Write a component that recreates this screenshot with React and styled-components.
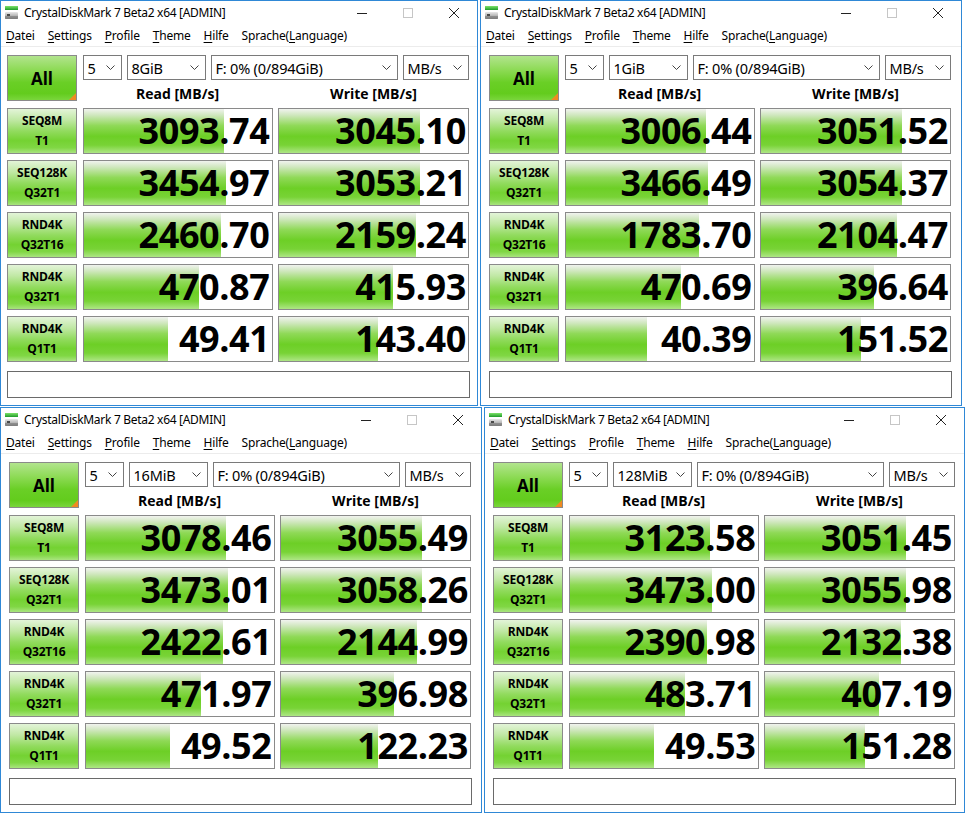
import React from "react";
import styled, { createGlobalStyle } from "styled-components";

const GlobalStyle = createGlobalStyle`
  html, body {
    margin: 0;
    padding: 0;
    background: #ffffff;
    overflow: hidden;
  }
  body {
    font-family: "Open Sans", "Noto Sans", "Liberation Sans", sans-serif;
    color: #000;
  }
`;

const windows = [
  {
    size: "8GiB",
    read: [3093.74, 3454.97, 2460.7, 470.87, 49.41],
    write: [3045.1, 3053.21, 2159.24, 415.93, 143.4],
  },
  {
    size: "1GiB",
    read: [3006.44, 3466.49, 1783.7, 470.69, 40.39],
    write: [3051.52, 3054.37, 2104.47, 396.64, 151.52],
  },
  {
    size: "16MiB",
    read: [3078.46, 3473.01, 2422.61, 471.97, 49.52],
    write: [3055.49, 3058.26, 2144.99, 396.98, 122.23],
  },
  {
    size: "128MiB",
    read: [3123.58, 3473.0, 2390.98, 483.71, 49.53],
    write: [3051.45, 3055.98, 2132.38, 407.19, 151.28],
  },
];

const tests = [
  ["SEQ8M", "T1"],
  ["SEQ128K", "Q32T1"],
  ["RND4K", "Q32T16"],
  ["RND4K", "Q32T1"],
  ["RND4K", "Q1T1"],
];

const Page = styled.div`
  width: 965px;
  height: 813px;
  display: flex;
  flex-direction: column;
  gap: 1px;
`;

const Row = styled.div`
  display: flex;
  gap: 2px;
  height: ${(p) => p.$h}px;
`;

const Window = styled.div`
  width: ${(p) => p.$w}px;
  flex: ${(p) => (p.$w ? "none" : "1")};
  height: 100%;
  box-sizing: border-box;
  border: 1px solid #2f88d6;
  background: #fff;
  display: flex;
  flex-direction: column;
  overflow: hidden;
`;

const TitleBar = styled.div`
  height: 23px;
  display: flex;
  align-items: center;
  padding-left: 3px;
  font-family: "Noto Sans", "Open Sans", sans-serif;
  font-size: 12px;
  color: #000;
`;

const TitleText = styled.span`
  margin-left: 5px;
  letter-spacing: -0.3px;
`;

const Caption = styled.div`
  margin-left: auto;
  display: flex;
  height: 100%;
`;

const CaptionButton = styled.div`
  width: 46px;
  height: 100%;
  display: flex;
  align-items: center;
  justify-content: center;
`;

const MenuBar = styled.div`
  height: 22px;
  display: flex;
  align-items: center;
  border-bottom: 1px solid #ececec;
  font-family: "Noto Sans", "Open Sans", sans-serif;
  font-size: 12px;
`;

const MenuItem = styled.span`
  padding: 0 6px 0 5px;
  margin-right: 2px;
  letter-spacing: -0.2px;
  u {
    text-decoration: underline;
    text-underline-offset: 2px;
  }
`;

const Body = styled.div`
  padding: 8px 0 0 ${(p) => p.$pad}px;
  display: flex;
  flex-direction: column;
  gap: 6px;
  width: 463px;
`;

const Grid = styled.div`
  display: grid;
  grid-template-columns: 70px 190px 191px;
  column-gap: 5.5px;
`;

const TopArea = styled(Grid)`
  grid-template-rows: 25px 21px;
  margin-bottom: 1px;
`;

const AllButton = styled.div`
  grid-row: 1 / span 2;
  position: relative;
  box-sizing: border-box;
  border: 1px solid #8a8a8a;
  background: linear-gradient(
    to bottom,
    #b2e48e 0%,
    #8fdb58 30%,
    #6acf26 60%,
    #63cc1d 85%,
    #7ad63c 100%
  );
  display: flex;
  align-items: center;
  justify-content: center;
  font-weight: 700;
  font-size: 17px;
  &::after {
    content: "";
    position: absolute;
    right: 0;
    bottom: 0;
    border-style: solid;
    border-width: 0 0 7px 7px;
    border-color: transparent transparent #f08a22 transparent;
  }
`;

const ComboRow = styled.div`
  grid-column: 2 / span 2;
  display: flex;
  gap: 5px;
`;

const Combo = styled.div`
  width: ${(p) => (p.$w ? `${p.$w}px` : "auto")};
  flex: ${(p) => (p.$w ? "none" : "1")};
  box-sizing: border-box;
  border: 1px solid #7a7a7a;
  background: #fff;
  display: flex;
  align-items: center;
  padding: 0 6px 0 4px;
  font-family: "Noto Sans", "Open Sans", sans-serif;
  font-size: 14.5px;
  letter-spacing: -0.2px;
  svg {
    margin-left: auto;
  }
`;

const Header = styled.div`
  display: flex;
  align-items: center;
  justify-content: center;
  font-weight: 700;
  font-size: 14px;
  padding-top: 6px;
`;

const DataRow = styled(Grid)`
  height: 46px;
`;

const LabelButton = styled.div`
  box-sizing: border-box;
  border: 1px solid #8a8a8a;
  background: linear-gradient(
    to bottom,
    #e3f4d8 0%,
    #c0e8a4 25%,
    #92db5f 50%,
    #74d232 72%,
    #80d744 88%,
    #a9e47f 100%
  );
  display: flex;
  flex-direction: column;
  align-items: center;
  justify-content: center;
  font-weight: 700;
  font-size: 12px;
  line-height: 20px;
  letter-spacing: -0.2px;
`;

const ValueBox = styled.div`
  position: relative;
  box-sizing: border-box;
  border: 1px solid #8a8a8a;
  background: #fff;
  display: flex;
  align-items: center;
  justify-content: flex-end;
`;

const Bar = styled.div`
  position: absolute;
  left: 0;
  top: 0;
  bottom: 0;
  background: linear-gradient(
    to bottom,
    #f1f3ef 0%,
    #cfe7bd 14%,
    #8fd957 38%,
    #6dcf26 62%,
    #78d336 82%,
    #aee685 100%
  );
`;

const Value = styled.span`
  position: relative;
  font-weight: 700;
  font-size: 36px;
  line-height: 44px;
  padding-right: 2px;
  letter-spacing: -0.4px;
`;

const Comment = styled.div`
  margin-top: 3px;
  height: 27px;
  box-sizing: border-box;
  border: 1px solid #6a6a6a;
  background: #fff;
`;

function DriveIcon() {
  return (
    <svg width="15" height="15" viewBox="0 0 15 15">
      <defs>
        <linearGradient id="gbar" x1="0" y1="0" x2="0" y2="1">
          <stop offset="0" stopColor="#7ee36a" />
          <stop offset="1" stopColor="#1f9a2a" />
        </linearGradient>
        <linearGradient id="gbody" x1="0" y1="0" x2="0" y2="1">
          <stop offset="0" stopColor="#e8e8e8" />
          <stop offset="1" stopColor="#8a8a8a" />
        </linearGradient>
      </defs>
      <rect x="1" y="1" width="13" height="4" fill="url(#gbar)" />
      <rect x="1" y="7" width="13" height="7" rx="1" fill="url(#gbody)" />
      <rect x="1" y="11" width="13" height="3" fill="#6d6d6d" opacity="0.5" />
      <rect x="3" y="9" width="3" height="2" fill="#4a4a4a" />
    </svg>
  );
}

function Chevron() {
  return (
    <svg width="9" height="5" viewBox="0 0 9 5">
      <path d="M0.5 0.5 L4.5 4.5 L8.5 0.5" fill="none" stroke="#444" strokeWidth="1" />
    </svg>
  );
}

function CaptionButtons() {
  return (
    <Caption>
      <CaptionButton>
        <svg width="10" height="10" viewBox="0 0 10 10">
          <path d="M0 5.5 H10" stroke="#222" strokeWidth="1" />
        </svg>
      </CaptionButton>
      <CaptionButton>
        <svg width="10" height="10" viewBox="0 0 10 10">
          <rect x="0.5" y="0.5" width="9" height="9" fill="none" stroke="#c6c6c6" />
        </svg>
      </CaptionButton>
      <CaptionButton>
        <svg width="10" height="10" viewBox="0 0 10 10">
          <path d="M0 0 L10 10 M10 0 L0 10" stroke="#222" strokeWidth="1" />
        </svg>
      </CaptionButton>
    </Caption>
  );
}

const barWidth = (v) => {
  const r = Math.log10(v * 10) / 6;
  return `${Math.max(0, Math.min(1, r)) * 100}%`;
};

function Meter({ value }) {
  return (
    <ValueBox>
      <Bar style={{ width: barWidth(value) }} />
      <Value>{value.toFixed(2)}</Value>
    </ValueBox>
  );
}

function DiskMark({ data, width, pad }) {
  return (
    <Window $w={width}>
      <TitleBar>
        <DriveIcon />
        <TitleText>CrystalDiskMark 7 Beta2 x64 [ADMIN]</TitleText>
        <CaptionButtons />
      </TitleBar>
      <MenuBar>
        <MenuItem>
          <u>D</u>atei
        </MenuItem>
        <MenuItem>
          <u>S</u>ettings
        </MenuItem>
        <MenuItem>
          <u>P</u>rofile
        </MenuItem>
        <MenuItem>
          <u>T</u>heme
        </MenuItem>
        <MenuItem>
          <u>H</u>ilfe
        </MenuItem>
        <MenuItem>
          Sprache(<u>L</u>anguage)
        </MenuItem>
      </MenuBar>
      <Body $pad={pad}>
        <TopArea>
          <AllButton>All</AllButton>
          <ComboRow>
            <Combo $w={39}>
              5<Chevron />
            </Combo>
            <Combo $w={79}>
              {data.size}
              <Chevron />
            </Combo>
            <Combo $w={187}>
              F: 0% (0/894GiB)
              <Chevron />
            </Combo>
            <Combo>
              MB/s
              <Chevron />
            </Combo>
          </ComboRow>
          <Header>Read [MB/s]</Header>
          <Header>Write [MB/s]</Header>
        </TopArea>
        {tests.map(([a, b], i) => (
          <DataRow key={a + b}>
            <LabelButton>
              <span>{a}</span>
              <span>{b}</span>
            </LabelButton>
            <Meter value={data.read[i]} />
            <Meter value={data.write[i]} />
          </DataRow>
        ))}
        <Comment />
      </Body>
    </Window>
  );
}

export default function App() {
  return (
    <>
      <GlobalStyle />
      <Page>
        <Row $h={406}>
          <DiskMark data={windows[0]} width={478} pad={6} />
          <DiskMark data={windows[1]} width={482} pad={8} />
        </Row>
        <Row $h={406}>
          <DiskMark data={windows[2]} width={482} pad={8} />
          <DiskMark data={windows[3]} pad={8} />
        </Row>
      </Page>
    </>
  );
}
